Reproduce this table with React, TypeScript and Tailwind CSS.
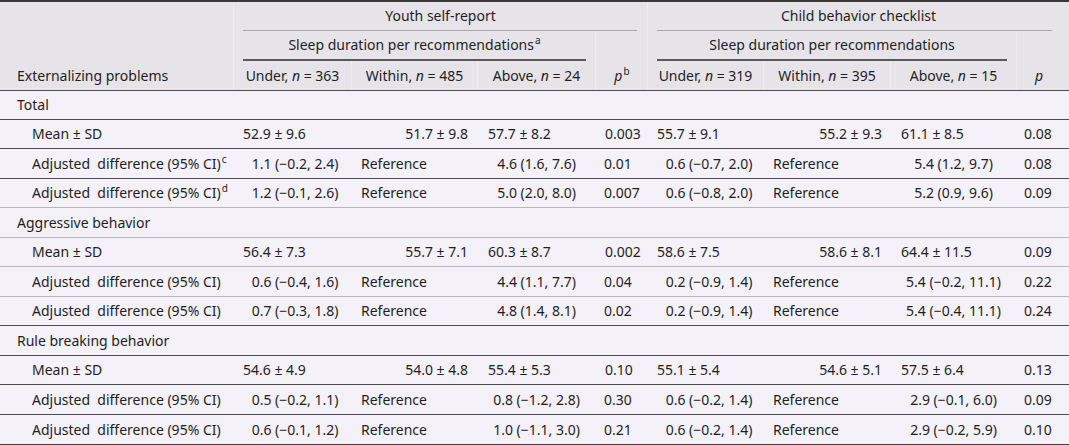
import React from 'react';

const grid = 'grid grid-cols-[234px_118px_126px_117px_53px_116px_127px_125px_53px]';

type Row = {
  kind: 'title' | 'mean' | 'adj';
  label: React.ReactNode;
  v?: string[];
  h: string;
  line: string;
};

const meanCls = [
  'pl-[9px]',
  'text-right pr-[10px]',
  'pl-[10px]',
  'pl-[10px]',
  'pl-[9px]',
  'text-right pr-[9px]',
  'pl-[10px]',
  'pl-[8px]',
];

const adjCls = [
  'text-center pl-[4px]',
  'pl-[9px]',
  'text-center',
  'pl-[9px]',
  'text-center pl-[6px]',
  'pl-[9px]',
  'text-center',
  'pl-[8px]',
];

const dark = 'border-b border-[#4d4d4d]';
const light = 'border-b border-[#b8b6bc]';

const Sup = ({ c }: { c: string }) => (
  <span className="inline-block text-[10px] align-top -translate-y-[3px] ml-[1px]">{c}</span>
);
const N = () => <i>n</i>;

const adjLabel = (s?: string) => (
  <>
    Adjusted&nbsp; difference (95% CI){s && <Sup c={s} />}
  </>
);

const rows: Row[] = [
  { kind: 'title', label: 'Total', h: 'h-[29px]', line: dark },
  {
    kind: 'mean',
    label: 'Mean ± SD',
    v: ['52.9 ± 9.6', '51.7 ± 9.8', '57.7 ± 8.2', '0.003', '55.7 ± 9.1', '55.2 ± 9.3', '61.1 ± 8.5', '0.08'],
    h: 'h-[29px]',
    line: dark,
  },
  {
    kind: 'adj',
    label: adjLabel('c'),
    v: ['1.1 (−0.2, 2.4)', 'Reference', '4.6 (1.6, 7.6)', '0.01', '0.6 (−0.7, 2.0)', 'Reference', '5.4 (1.2, 9.7)', '0.08'],
    h: 'h-[30px]',
    line: dark,
  },
  {
    kind: 'adj',
    label: adjLabel('d'),
    v: ['1.2 (−0.1, 2.6)', 'Reference', '5.0 (2.0, 8.0)', '0.007', '0.6 (−0.8, 2.0)', 'Reference', '5.2 (0.9, 9.6)', '0.09'],
    h: 'h-[29px]',
    line: light,
  },
  { kind: 'title', label: 'Aggressive behavior', h: 'h-[30px]', line: light },
  {
    kind: 'mean',
    label: 'Mean ± SD',
    v: ['56.4 ± 7.3', '55.7 ± 7.1', '60.3 ± 8.7', '0.002', '58.6 ± 7.5', '58.6 ± 8.1', '64.4 ± 11.5', '0.09'],
    h: 'h-[29px]',
    line: light,
  },
  {
    kind: 'adj',
    label: adjLabel(),
    v: ['0.6 (−0.4, 1.6)', 'Reference', '4.4 (1.1, 7.7)', '0.04', '0.2 (−0.9, 1.4)', 'Reference', '5.4 (−0.2, 11.1)', '0.22'],
    h: 'h-[30px]',
    line: light,
  },
  {
    kind: 'adj',
    label: adjLabel(),
    v: ['0.7 (−0.3, 1.8)', 'Reference', '4.8 (1.4, 8.1)', '0.02', '0.2 (−0.9, 1.4)', 'Reference', '5.4 (−0.4, 11.1)', '0.24'],
    h: 'h-[29px]',
    line: dark,
  },
  { kind: 'title', label: 'Rule breaking behavior', h: 'h-[30px]', line: dark },
  {
    kind: 'mean',
    label: 'Mean ± SD',
    v: ['54.6 ± 4.9', '54.0 ± 4.8', '55.4 ± 5.3', '0.10', '55.1 ± 5.4', '54.6 ± 5.1', '57.5 ± 6.4', '0.13'],
    h: 'h-[29px]',
    line: dark,
  },
  {
    kind: 'adj',
    label: adjLabel(),
    v: ['0.5 (−0.2, 1.1)', 'Reference', '0.8 (−1.2, 2.8)', '0.30', '0.6 (−0.2, 1.4)', 'Reference', '2.9 (−0.1, 6.0)', '0.09'],
    h: 'h-[30px]',
    line: dark,
  },
  {
    kind: 'adj',
    label: adjLabel(),
    v: ['0.6 (−0.1, 1.2)', 'Reference', '1.0 (−1.1, 3.0)', '0.21', '0.6 (−0.2, 1.4)', 'Reference', '2.9 (−0.2, 5.9)', '0.10'],
    h: 'h-[31px]',
    line: 'border-b-2 border-[#3a3a3a]',
  },
];

const Header = () => (
  <div className={`${grid} grid-rows-[29px_30px_29px] bg-[#e6e4e9] border-t-2 border-[#3a3a3a] border-b border-b-[#4d4d4d]`}>
    {/* left label column */}
    <div className="row-span-3 flex items-end border-r border-[#eeecf1]">
      <div className="h-[28px] flex items-center pl-[17px]">Externalizing problems</div>
    </div>

    {/* group titles */}
    <div className="col-span-4 flex flex-col border-r border-[#eeecf1]">
      <div className="flex-1 flex items-center justify-center">Youth self-report</div>
      <div className="h-px bg-[#a8a7ab] ml-[9px] mr-[10px]" />
    </div>
    <div className="col-span-4 flex flex-col">
      <div className="flex-1 flex items-center justify-center">Child behavior checklist</div>
      <div className="h-px bg-[#a8a7ab] ml-[9px] mr-[17px]" />
    </div>

    {/* sleep duration sub-headers */}
    <div className="col-span-3 flex flex-col">
      <div className="flex-1 flex items-center justify-center">
        <span>
          Sleep duration per recommendations<Sup c="a" />
        </span>
      </div>
      <div className="h-[2px] bg-[#5a595d] mx-[9px]" />
    </div>
    <div className="row-span-2 flex items-end justify-center border-x border-[#eeecf1]">
      <div className="h-[28px] flex items-center pl-[1px]">
        <span>
          <i>p</i>
          <Sup c="b" />
        </span>
      </div>
    </div>
    <div className="col-span-3 flex flex-col">
      <div className="flex-1 flex items-center justify-center">Sleep duration per recommendations</div>
      <div className="h-[2px] bg-[#5a595d] mx-[9px]" />
    </div>
    <div className="row-span-2 flex items-end justify-center border-l border-[#eeecf1]">
      <div className="h-[28px] flex items-center pr-[8px]">
        <i>p</i>
      </div>
    </div>

    {/* n labels */}
    <div className="flex items-center justify-center border-r border-[#eeecf1]">
      <span>Under, <N /> = 363</span>
    </div>
    <div className="flex items-center justify-center border-r border-[#eeecf1]">
      <span>Within, <N /> = 485</span>
    </div>
    <div className="flex items-center justify-center">
      <span>Above, <N /> = 24</span>
    </div>
    <div className="flex items-center justify-center border-r border-[#eeecf1]">
      <span>Under, <N /> = 319</span>
    </div>
    <div className="flex items-center justify-center border-r border-[#eeecf1]">
      <span>Within, <N /> = 395</span>
    </div>
    <div className="flex items-center justify-center">
      <span>Above, <N /> = 15</span>
    </div>
  </div>
);

export default function App() {
  return (
    <div className="w-[1069px] h-[445px] overflow-hidden bg-[#f4f1f8] text-[#1f1f1f] text-[14px] leading-none font-['Noto_Sans','Open_Sans',sans-serif]">
      <Header />
      {rows.map((r, i) => (
        <div key={i} className={`${grid} ${r.h} ${r.line} box-border items-center`}>
          {r.kind === 'title' ? (
            <div className="col-span-9 pl-[17px]">{r.label}</div>
          ) : (
            <>
              <div className="pl-[32px] whitespace-nowrap">{r.label}</div>
              {r.v!.map((v, j) => (
                <div key={j} className={`whitespace-nowrap ${r.kind === 'mean' ? meanCls[j] : adjCls[j]}`}>
                  {v}
                </div>
              ))}
            </>
          )}
        </div>
      ))}
    </div>
  );
}
